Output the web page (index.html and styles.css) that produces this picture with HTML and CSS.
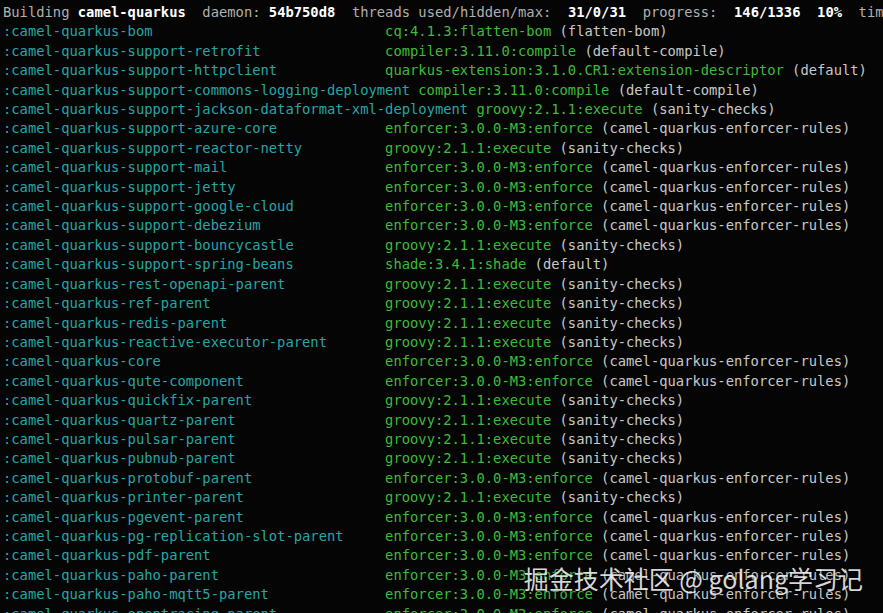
FILE: index.html
```html
<!DOCTYPE html>
<html lang="en">
<head>
<meta charset="utf-8">
<title>mvnd build</title>
<link rel="stylesheet" href="styles.css">
</head>
<body>
<div class="term">
  <div class="row head"><span class="lbl">Building </span><span class="val">camel-quarkus</span><span class="lbl">  daemon: </span><span class="val">54b750d8</span><span class="lbl">  threads used/hidden/max:  </span><span class="val">31/0/31</span><span class="lbl">  progress:  </span><span class="val">146/1336  10%</span><span class="lbl">  tim</span></div>
  <div class="row"><span class="mod">:camel-quarkus-bom</span><span class="goal">cq:4.1.3:flatten-bom</span><span class="exe"> (flatten-bom)</span></div>
  <div class="row"><span class="mod">:camel-quarkus-support-retrofit</span><span class="goal">compiler:3.11.0:compile</span><span class="exe"> (default-compile)</span></div>
  <div class="row"><span class="mod">:camel-quarkus-support-httpclient</span><span class="goal">quarkus-extension:3.1.0.CR1:extension-descriptor</span><span class="exe"> (default)</span></div>
  <div class="row"><span class="mod">:camel-quarkus-support-commons-logging-deployment</span><span class="goal">compiler:3.11.0:compile</span><span class="exe"> (default-compile)</span></div>
  <div class="row"><span class="mod">:camel-quarkus-support-jackson-dataformat-xml-deployment</span><span class="goal">groovy:2.1.1:execute</span><span class="exe"> (sanity-checks)</span></div>
  <div class="row"><span class="mod">:camel-quarkus-support-azure-core</span><span class="goal">enforcer:3.0.0-M3:enforce</span><span class="exe"> (camel-quarkus-enforcer-rules)</span></div>
  <div class="row"><span class="mod">:camel-quarkus-support-reactor-netty</span><span class="goal">groovy:2.1.1:execute</span><span class="exe"> (sanity-checks)</span></div>
  <div class="row"><span class="mod">:camel-quarkus-support-mail</span><span class="goal">enforcer:3.0.0-M3:enforce</span><span class="exe"> (camel-quarkus-enforcer-rules)</span></div>
  <div class="row"><span class="mod">:camel-quarkus-support-jetty</span><span class="goal">enforcer:3.0.0-M3:enforce</span><span class="exe"> (camel-quarkus-enforcer-rules)</span></div>
  <div class="row"><span class="mod">:camel-quarkus-support-google-cloud</span><span class="goal">enforcer:3.0.0-M3:enforce</span><span class="exe"> (camel-quarkus-enforcer-rules)</span></div>
  <div class="row"><span class="mod">:camel-quarkus-support-debezium</span><span class="goal">enforcer:3.0.0-M3:enforce</span><span class="exe"> (camel-quarkus-enforcer-rules)</span></div>
  <div class="row"><span class="mod">:camel-quarkus-support-bouncycastle</span><span class="goal">groovy:2.1.1:execute</span><span class="exe"> (sanity-checks)</span></div>
  <div class="row"><span class="mod">:camel-quarkus-support-spring-beans</span><span class="goal">shade:3.4.1:shade</span><span class="exe"> (default)</span></div>
  <div class="row"><span class="mod">:camel-quarkus-rest-openapi-parent</span><span class="goal">groovy:2.1.1:execute</span><span class="exe"> (sanity-checks)</span></div>
  <div class="row"><span class="mod">:camel-quarkus-ref-parent</span><span class="goal">groovy:2.1.1:execute</span><span class="exe"> (sanity-checks)</span></div>
  <div class="row"><span class="mod">:camel-quarkus-redis-parent</span><span class="goal">groovy:2.1.1:execute</span><span class="exe"> (sanity-checks)</span></div>
  <div class="row"><span class="mod">:camel-quarkus-reactive-executor-parent</span><span class="goal">groovy:2.1.1:execute</span><span class="exe"> (sanity-checks)</span></div>
  <div class="row"><span class="mod">:camel-quarkus-core</span><span class="goal">enforcer:3.0.0-M3:enforce</span><span class="exe"> (camel-quarkus-enforcer-rules)</span></div>
  <div class="row"><span class="mod">:camel-quarkus-qute-component</span><span class="goal">enforcer:3.0.0-M3:enforce</span><span class="exe"> (camel-quarkus-enforcer-rules)</span></div>
  <div class="row"><span class="mod">:camel-quarkus-quickfix-parent</span><span class="goal">groovy:2.1.1:execute</span><span class="exe"> (sanity-checks)</span></div>
  <div class="row"><span class="mod">:camel-quarkus-quartz-parent</span><span class="goal">groovy:2.1.1:execute</span><span class="exe"> (sanity-checks)</span></div>
  <div class="row"><span class="mod">:camel-quarkus-pulsar-parent</span><span class="goal">groovy:2.1.1:execute</span><span class="exe"> (sanity-checks)</span></div>
  <div class="row"><span class="mod">:camel-quarkus-pubnub-parent</span><span class="goal">groovy:2.1.1:execute</span><span class="exe"> (sanity-checks)</span></div>
  <div class="row"><span class="mod">:camel-quarkus-protobuf-parent</span><span class="goal">enforcer:3.0.0-M3:enforce</span><span class="exe"> (camel-quarkus-enforcer-rules)</span></div>
  <div class="row"><span class="mod">:camel-quarkus-printer-parent</span><span class="goal">groovy:2.1.1:execute</span><span class="exe"> (sanity-checks)</span></div>
  <div class="row"><span class="mod">:camel-quarkus-pgevent-parent</span><span class="goal">enforcer:3.0.0-M3:enforce</span><span class="exe"> (camel-quarkus-enforcer-rules)</span></div>
  <div class="row"><span class="mod">:camel-quarkus-pg-replication-slot-parent</span><span class="goal">enforcer:3.0.0-M3:enforce</span><span class="exe"> (camel-quarkus-enforcer-rules)</span></div>
  <div class="row"><span class="mod">:camel-quarkus-pdf-parent</span><span class="goal">enforcer:3.0.0-M3:enforce</span><span class="exe"> (camel-quarkus-enforcer-rules)</span></div>
  <div class="row"><span class="mod">:camel-quarkus-paho-parent</span><span class="goal">enforcer:3.0.0-M3:enforce</span><span class="exe"> (camel-quarkus-enforcer-rules)</span></div>
  <div class="row"><span class="mod">:camel-quarkus-paho-mqtt5-parent</span><span class="goal">enforcer:3.0.0-M3:enforce</span><span class="exe"> (camel-quarkus-enforcer-rules)</span></div>
  <div class="row"><span class="mod">:camel-quarkus-opentracing-parent</span><span class="goal">enforcer:3.0.0-M3:enforce</span><span class="exe"> (camel-quarkus-enforcer-rules)</span></div>
</div>
<div class="watermark">掘金技术社区 @ golang学习记</div>
</body>
</html>
```

FILE: styles.css
```css
html, body {
  margin: 0;
  padding: 0;
  background: #050505;
  overflow: hidden;
  width: 883px;
  height: 613px;
}

.term {
  padding: 3px 0 0 3px;
  font-family: "DejaVu Sans Mono", "Liberation Mono", monospace;
  font-size: 13.8px;
  line-height: 19.4px;
  color: #c4c4c4;
}

.row {
  display: flex;
  white-space: pre;
}

.head .lbl {
  color: #b0b0b0;
}

.head .val {
  color: #ffffff;
  font-weight: bold;
}

.mod {
  color: #26a6a6;
  min-width: 46ch;
  padding-right: 1ch;
  box-sizing: border-box;
  flex-shrink: 0;
}

.goal {
  color: #3dbb3a;
}

.exe {
  color: #c8c8c8;
}

.watermark {
  position: absolute;
  right: 20px;
  top: 561px;
  font-family: "Noto Sans CJK SC", "Noto Sans", sans-serif;
  font-size: 25px;
  line-height: 34px;
  color: rgba(255, 255, 255, 0.85);
  text-shadow: 0 0 3px rgba(0, 0, 0, 0.6);
  white-space: nowrap;
}
```
